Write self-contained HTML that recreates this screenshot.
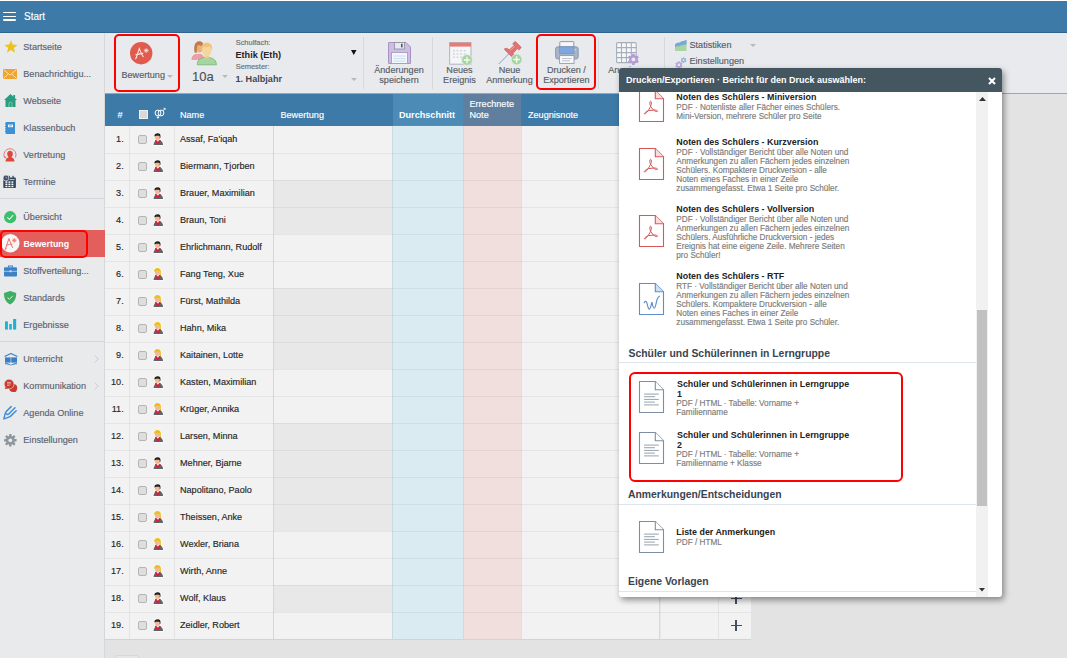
<!DOCTYPE html>
<html><head><meta charset="utf-8">
<style>
*{box-sizing:border-box;margin:0;padding:0}
html,body{width:1070px;height:658px;overflow:hidden;background:#fff;font-family:"Liberation Sans",sans-serif;position:relative}
.a{position:absolute}
.tx{position:absolute;white-space:nowrap;-webkit-text-stroke:0.15px currentColor}
.ic{position:absolute;overflow:visible}
#hdr{position:absolute;left:0;top:1px;width:1067px;height:32px;background:#3e7aa8;border-bottom:1px solid #2f6690}
#hdr .hb{position:absolute;left:3.3px;width:13px;height:1.6px;background:#fff;border-radius:1px}
#side{position:absolute;left:0;top:33px;width:105px;height:625px;background:#e9eaec;border-right:1px solid #d6d7d9}
.sep{position:absolute;left:0;width:104px;height:1px;background:#d5d6d9}
#tb{position:absolute;left:105px;top:33px;width:962px;height:61px;background:#e9eaed;border-bottom:1px solid #a3a5a8}
#content{position:absolute;left:105px;top:94px;width:962px;height:564px;background:#e3e3e3}
.tsep{position:absolute;top:37px;width:1px;height:52px;background:#d7d8da}
.th{position:absolute;top:94px;height:32px;background:#3e7aa8}
.cbh{position:absolute;width:9px;height:9px;background:#d9d9d9;border:1px solid #f0f0f0}
.tr{position:absolute;left:105px;width:646px;height:27px}
.td{position:absolute;top:0;height:26px;background:#f2f2f2}
.cb{position:absolute;left:33px;top:8.7px;width:9px;height:9px;border:1px solid #b5b5b5;border-radius:2px;background:#dedede}
.pi{position:absolute;left:48px;top:6.8px;overflow:visible}
.plus{position:absolute;left:625.5px;top:8px;width:11px;height:11px}
.plus:before{content:"";position:absolute;left:0;top:4.7px;width:11px;height:1.6px;background:#44505e}
.plus:after{content:"";position:absolute;left:4.7px;top:0;width:1.6px;height:11px;background:#44505e}
.redbox{position:absolute;border:2px solid #f00;border-radius:5px}
#dlg{position:absolute;left:619px;top:68px;width:383px;height:529px;background:#fff;box-shadow:2px 3px 6px rgba(0,0,0,.42);border-radius:3px;overflow:hidden}
#dlg .ttl{position:absolute;left:0;top:0;width:383px;height:24px;background:#44565f}
#dlg .body{position:absolute;left:0;top:24px;width:383px;height:505px;overflow:hidden}
#dlg .body > *{margin-top:-24px}
.hl{position:absolute;left:0;width:357px;height:1px;background:#dde6ee}
</style></head><body>
<div id="hdr">
  <div class="hb" style="top:10.6px"></div><div class="hb" style="top:14.6px"></div><div class="hb" style="top:18.4px"></div>
  <div class="tx" style="left:24px;top:10px;color:#fff;font-size:10px;line-height:12px">Start</div>
</div>
<div id="side">
</div>
<div id="tb"></div>
<div id="content"></div>
<svg class="ic" style="left:3.5px;top:40px" width="14" height="13" viewBox="0 0 14 13"><path d="M7 0.3 L8.7 4.6 L13.6 4.9 L9.8 7.9 L11.1 12.7 L7 10 L2.9 12.7 L4.2 7.9 L0.4 4.9 L5.3 4.6Z" fill="#eec21d"/></svg>
<div class="tx" style="left:23.3px;top:41.99px;font-size:9.1px;line-height:10.92px;color:#5a6371;">Startseite</div>
<svg class="ic" style="left:3.3px;top:68.8px" width="14" height="10" viewBox="0 0 14 10"><rect x="0" y="0" width="14" height="10" fill="#f2a32f"/><path d="M0.6 0.8 L7 6 L13.4 0.8 M0.6 9.4 L5 5.2 M13.4 9.4 L9 5.2" stroke="#fde6c0" stroke-width="0.9" fill="none"/></svg>
<div class="tx" style="left:23.3px;top:68.99px;font-size:9.1px;line-height:10.92px;color:#5a6371;">Benachrichtigu...</div>
<svg class="ic" style="left:3.8px;top:94px" width="13" height="13" viewBox="0 0 13 13"><path d="M6.5 0 L13 6 L11.5 6 L11.5 13 L1.5 13 L1.5 6 L0 6Z" fill="#2a9d80"/><rect x="9.3" y="1" width="1.8" height="3.5" fill="#2a9d80"/><path d="M5 13 L5 8.8 Q6.5 7.3 8 8.8 L8 13" fill="none" stroke="#8fd0bd" stroke-width="0.8"/></svg>
<div class="tx" style="left:23.3px;top:95.99px;font-size:9.1px;line-height:10.92px;color:#5a6371;">Webseite</div>
<svg class="ic" style="left:5px;top:121.8px" width="10" height="12" viewBox="0 0 10 12"><rect x="0.6" y="0" width="9.4" height="12" rx="0.6" fill="#3b90d6"/><rect x="3" y="2.6" width="5" height="2.6" fill="#fff"/><rect x="4" y="3.5" width="3" height="0.8" fill="#3b90d6"/><path d="M0 2 h1.2 M0 4.5 h1.2 M0 7 h1.2 M0 9.5 h1.2" stroke="#2a6fa8" stroke-width="0.7"/></svg>
<div class="tx" style="left:23.3px;top:122.99px;font-size:9.1px;line-height:10.92px;color:#5a6371;">Klassenbuch</div>
<svg class="ic" style="left:2.9px;top:148.2px" width="14" height="14" viewBox="0 0 14 14"><path d="M2.5 13.5 C2.5 10.6 4.2 9.6 5.6 9.2 C4.6 8.3 4.1 7 4.2 5.6 C4.3 3.8 5.4 2.8 7 2.8 C8.6 2.8 9.7 3.8 9.8 5.6 C9.9 7 9.4 8.3 8.4 9.2 C9.8 9.6 11.5 10.6 11.5 13.5Z" fill="#e0463a"/><path d="M12.3 9.5 A6 6 0 1 0 1.8 9.8" fill="none" stroke="#e86a60" stroke-width="0.9"/><path d="M0.6 8.6 L2.2 10.8 L3.4 8.8Z" fill="#e86a60"/></svg>
<div class="tx" style="left:23.3px;top:149.99px;font-size:9.1px;line-height:10.92px;color:#5a6371;">Vertretung</div>
<svg class="ic" style="left:3.3px;top:174.8px" width="13.2" height="13.2" viewBox="0 0 13.2 13.2"><rect x="0.3" y="2.6" width="12.6" height="10.4" rx="0.8" fill="#33475b"/><rect x="5.6" y="0.8" width="1.3" height="3" fill="#33475b"/><rect x="9.4" y="0.8" width="1.3" height="3" fill="#33475b"/><circle cx="3" cy="3" r="2.9" fill="#33475b" stroke="#e9eaec" stroke-width="0.7"/><path d="M3 1.6 V3.1 H4.3" stroke="#e9eaec" stroke-width="0.6" fill="none"/><g fill="#fff"><rect x="2.4" y="6.4" width="2" height="1.4"/><rect x="5.4" y="6.4" width="2" height="1.4"/><rect x="8.4" y="6.4" width="2" height="1.4"/><rect x="2.4" y="8.6" width="2" height="1.4"/><rect x="5.4" y="8.6" width="2" height="1.4"/><rect x="8.4" y="8.6" width="2" height="1.4"/><rect x="2.4" y="10.8" width="2" height="1.4"/><rect x="5.4" y="10.8" width="2" height="1.4"/><rect x="8.4" y="10.8" width="2" height="1.4"/></g><path d="M6.5 4.6 h5" stroke="#fff" stroke-width="0.7"/></svg>
<div class="tx" style="left:23.3px;top:176.99px;font-size:9.1px;line-height:10.92px;color:#5a6371;">Termine</div>
<svg class="ic" style="left:4.1px;top:210.6px" width="12.4" height="12.4" viewBox="0 0 12.4 12.4"><circle cx="6.2" cy="6.2" r="6.1" fill="#3cbf6a"/><path d="M3.3 6.4 L5.4 8.4 L9.2 4.2" stroke="#d9f5e2" stroke-width="1.1" fill="none"/></svg>
<div class="tx" style="left:23.3px;top:211.99px;font-size:9.1px;line-height:10.92px;color:#5a6371;">Übersicht</div>
<svg class="ic" style="left:4px;top:265px" width="13" height="11.5" viewBox="0 0 13 11.5"><rect x="0" y="2.3" width="13" height="9.2" rx="1" fill="#3b82c4"/><path d="M4.5 2.3 V1 H8.5 V2.3" stroke="#3b82c4" stroke-width="1.1" fill="none"/><path d="M0 6.3 H13" stroke="#cfe2f3" stroke-width="0.7"/><rect x="5.5" y="5.4" width="2" height="1.8" fill="#cfe2f3"/></svg>
<div class="tx" style="left:23.3px;top:265.99px;font-size:9.1px;line-height:10.92px;color:#5a6371;">Stoffverteilung...</div>
<svg class="ic" style="left:4.2px;top:290.6px" width="12.2" height="13.5" viewBox="0 0 12.2 13.5"><path d="M6.1 0 L12.2 2 C12.2 8 10.5 11 6.1 13.5 C1.7 11 0 8 0 2Z" fill="#3dae62"/><path d="M3.6 6.6 L5.4 8.3 L8.8 4.8" stroke="#d9f1df" stroke-width="1" fill="none"/></svg>
<div class="tx" style="left:23.3px;top:292.99px;font-size:9.1px;line-height:10.92px;color:#5a6371;">Standards</div>
<svg class="ic" style="left:4.9px;top:319.2px" width="11.2" height="10.6" viewBox="0 0 11.2 10.6"><rect x="0" y="2.4" width="2.9" height="8.2" fill="#1fb1cf"/><rect x="4.2" y="5" width="2.6" height="5.6" fill="#1fb1cf"/><rect x="8.1" y="0" width="3.1" height="10.6" fill="#1fb1cf"/></svg>
<div class="tx" style="left:23.3px;top:319.99px;font-size:9.1px;line-height:10.92px;color:#5a6371;">Ergebnisse</div>
<svg class="ic" style="left:3.5px;top:352.6px" width="14" height="12.6" viewBox="0 0 14 12.6"><path d="M0.6 3.6 L6.9 0.5 L13.4 3.6" fill="none" stroke="#3a7fc2" stroke-width="1.1" stroke-linejoin="round"/><path d="M1 4.4 H13 V9.6 H1Z" fill="#3a7fc2"/><path d="M6.9 4.4 V10.6" stroke="#e9eaec" stroke-width="0.6"/><path d="M1 9.8 C3 10 5 10.4 6.9 11.8 C8.8 10.4 11 10 13 9.8 V11.2 C11 11.2 8.8 11.8 6.9 12.4 C5 11.8 3 11.2 1 11.2Z" fill="#4f8fcb"/></svg>
<div class="tx" style="left:23.3px;top:353.99px;font-size:9.1px;line-height:10.92px;color:#5a6371;">Unterricht</div>
<svg class="ic" style="left:3.8px;top:379px" width="13.6" height="13.4" viewBox="0 0 13.6 13.4"><circle cx="9.2" cy="8.9" r="4" fill="#c9392f"/><path d="M10.6 11.2 L12.8 13 L9 12.6Z" fill="#c9392f"/><circle cx="5.1" cy="5.1" r="4.9" fill="#c9392f" stroke="#e9eaec" stroke-width="0.6"/><path d="M1.8 8 L0.6 10 L4.2 9.6Z" fill="#c9392f"/><path d="M3 3.4 h4 M3 4.9 h4 M3 6.4 h2.6" stroke="#eab0aa" stroke-width="0.9"/></svg>
<div class="tx" style="left:23.3px;top:380.99px;font-size:9.1px;line-height:10.92px;color:#5a6371;">Kommunikation</div>
<svg class="ic" style="left:3.3px;top:405.8px" width="14.2" height="13.8" viewBox="0 0 14.2 13.8"><g fill="none" stroke="#3f8fd8" stroke-width="1.5" stroke-linecap="round" stroke-linejoin="round"><path d="M8.2 0.6 L3 5.8 C2 7.4 1.4 10 0.9 12.9 C3.6 12 6 11.2 7.4 10.4 L13.2 4.8"/><path d="M12 1.8 L5.8 8 C5 8.8 4 8.6 3.6 7.8"/></g></svg>
<div class="tx" style="left:23.3px;top:407.99px;font-size:9.1px;line-height:10.92px;color:#5a6371;">Agenda Online</div>
<svg class="ic" style="left:3.8px;top:433.8px" width="12.6" height="12.6" viewBox="0 0 12.6 12.6"><g fill="#8c969b"><circle cx="6.3" cy="6.3" r="4.4"/><g id="tth"><rect x="5.1" y="0" width="2.4" height="12.6" rx="0.4"/></g><rect x="5.1" y="0" width="2.4" height="12.6" rx="0.4" transform="rotate(45 6.3 6.3)"/><rect x="5.1" y="0" width="2.4" height="12.6" rx="0.4" transform="rotate(90 6.3 6.3)"/><rect x="5.1" y="0" width="2.4" height="12.6" rx="0.4" transform="rotate(135 6.3 6.3)"/></g><circle cx="6.3" cy="6.3" r="1.9" fill="#e9eaec"/></svg>
<div class="tx" style="left:23.3px;top:434.99px;font-size:9.1px;line-height:10.92px;color:#5a6371;">Einstellungen</div>
<div class="a" style="left:0;top:230px;width:105px;height:27px;background:#e35f5c"></div>
<svg class="ic" style="left:0.9px;top:233.8px" width="18.6" height="18.6" viewBox="0 0 18.6 18.6"><circle cx="9.3" cy="9.3" r="9.2" fill="#f7f7f7"/><path d="M4.6 14.6 C5.4 12 6.8 7.6 8 4.6 C9 7.4 10.2 10.8 11.6 13.6 M5.6 11.2 C7.4 10.6 9.2 10.2 11 10 M4.2 15.6 L5.2 14.2" stroke="#e57470" stroke-width="1" fill="none" stroke-linecap="round"/><path d="M11.4 6.4 h3.8 M13.3 4.5 v3.8 M12 5 L14.6 7.8 M14.6 5 L12 7.8" stroke="#e57470" stroke-width="0.8" stroke-linecap="round"/></svg>
<div class="tx" style="left:23.4px;top:238.62px;font-size:8.85px;line-height:10.62px;color:#fff;font-weight:bold;-webkit-text-stroke:0;">Bewertung</div>
<div class="redbox" style="left:-0.5px;top:229.5px;width:88px;height:28.3px;border-radius:5px"></div>
<div class="sep" style="top:198px"></div><div class="sep" style="top:341px"></div>
<svg class="ic" style="left:94px;top:354.5px" width="5" height="8" viewBox="0 0 5 8"><path d="M0.8 0.5 L4.2 4 L0.8 7.5" stroke="#c4c6c9" stroke-width="0.9" fill="none"/></svg>
<svg class="ic" style="left:94px;top:381.5px" width="5" height="8" viewBox="0 0 5 8"><path d="M0.8 0.5 L4.2 4 L0.8 7.5" stroke="#c4c6c9" stroke-width="0.9" fill="none"/></svg>
<svg class="ic" style="left:129.8px;top:41.5px" width="22.4" height="22.4" viewBox="0 0 22.4 22.4"><circle cx="11.2" cy="11.2" r="11.2" fill="#e05a4e"/><path d="M6.2 16 C7.4 12.5 8.4 9 9.3 6.6 C10.4 9.4 11.6 12.4 13.2 14.6 M5.8 12.8 C8 12.2 10.4 11.8 12.8 11.4 M5.6 16.6 L6.6 15.2" stroke="#fbe6e3" stroke-width="1.1" fill="none" stroke-linecap="round"/><path d="M14.2 8.6 h4 M16.2 6.6 v4 M14.8 7.2 L17.6 10 M17.6 7.2 L14.8 10" stroke="#fbe6e3" stroke-width="0.8" stroke-linecap="round"/></svg>
<div class="tx" style="left:121.5px;top:70.49px;font-size:9.1px;line-height:10.92px;color:#555d66;">Bewertung</div>
<svg class="ic" style="left:166.5px;top:74.5px" width="6" height="3" viewBox="0 0 6 3"><path d="M0 0 H6 L3 3Z" fill="#b7b9bc"/></svg>
<svg class="ic" style="left:191px;top:41px" width="26" height="24" viewBox="0 0 26 24"><path d="M0.8 18.4 C0.8 15.6 2.6 13.8 5.2 13.3 L9.5 13.3 C11.5 13.8 12.6 15 12.6 18.4Z" fill="#ee9ea6" stroke="#d98790" stroke-width="0.5"/><ellipse cx="8.2" cy="7.2" rx="3.4" ry="4.4" fill="#e9b27c"/><path d="M3.6 11.4 C2.6 6 3.4 0.6 8 0.2 C11.4 0 12.8 2.6 12.4 5.4 C10.6 5 8.6 4 6.4 4.4 C5.8 6.6 5.8 9.6 5.6 12 Z" fill="#c47b4a"/><path d="M6.2 23.8 C6.2 19.8 8.6 17.4 12.6 16.6 L18.8 16.6 C22.8 17.4 25.4 19.8 25.4 23.8Z" fill="#a6d6a0" stroke="#6fae6a" stroke-width="0.7"/><path d="M13.6 14 L13.6 17.4 L18 17.4 L18 14Z" fill="#efcb8f"/><ellipse cx="15.8" cy="9.4" rx="4.8" ry="5.8" fill="#f6d69e"/><path d="M10.6 9.6 C10 4 12 1.8 15.8 1.8 C19.6 1.8 21.8 4 21 9.8 C20.4 7.6 19.6 6.2 18.6 5.6 C16.6 6.6 13.6 6.4 12.2 5.8 C11.4 6.8 11 8 10.6 9.6Z" fill="#eec37d"/></svg>
<div class="tx" style="left:192px;top:68.60px;font-size:13px;line-height:15.6px;color:#4a525b;">10a</div>
<svg class="ic" style="left:221.5px;top:75px" width="6" height="3" viewBox="0 0 6 3"><path d="M0 0 H6 L3 3Z" fill="#b7b9bc"/></svg>
<div class="tx" style="left:235.7px;top:39.35px;font-size:7.45px;line-height:8.94px;color:#6a6f75;">Schulfach:</div>
<div class="tx" style="left:235.5px;top:49.79px;font-size:9.1px;line-height:10.92px;color:#222;font-weight:bold;-webkit-text-stroke:0;">Ethik (Eth)</div>
<svg class="ic" style="left:350.5px;top:50px" width="5.5" height="5" viewBox="0 0 5.5 5"><path d="M0 0 H5.5 L2.75 5Z" fill="#111"/></svg>
<div class="tx" style="left:235.7px;top:62.55px;font-size:7.45px;line-height:8.94px;color:#6a6f75;">Semester:</div>
<div class="tx" style="left:235.5px;top:74.09px;font-size:9.1px;line-height:10.92px;color:#3f4750;font-weight:bold;-webkit-text-stroke:0;">1. Halbjahr</div>
<svg class="ic" style="left:350.5px;top:77.5px" width="6" height="3" viewBox="0 0 6 3"><path d="M0 0 H6 L3 3Z" fill="#b7b9bc"/></svg>
<div class="tsep" style="left:363px"></div>
<svg class="ic" style="left:387.5px;top:42px" width="23" height="22" viewBox="0 0 23 22"><path d="M0.5 1 Q0.5 0.5 1 0.5 L18 0.5 L22.5 5 L22.5 21 Q22.5 21.5 22 21.5 L1 21.5 Q0.5 21.5 0.5 21Z" fill="#cdbde3" stroke="#a593c2" stroke-width="1"/><rect x="6.5" y="0.5" width="10" height="6.5" fill="#e6e9ee" stroke="#8c8fa0" stroke-width="0.8"/><rect x="13" y="1.8" width="1.6" height="3.6" fill="#555"/><rect x="3.5" y="10.5" width="16" height="11" fill="#f4f7fb" stroke="#a593c2" stroke-width="0.8"/><path d="M5.5 14 H17.5 M5.5 16.5 H17.5 M5.5 19 H17.5" stroke="#bfd6ea" stroke-width="0.8"/></svg>
<div class="tx" style="left:199px;width:400px;text-align:center;top:64.89px;font-size:9.1px;line-height:10.92px;color:#555d66;">Änderungen</div>
<div class="tx" style="left:199px;width:400px;text-align:center;top:75.29px;font-size:9.1px;line-height:10.92px;color:#555d66;">speichern</div>
<div class="tsep" style="left:432px"></div>
<svg class="ic" style="left:448.5px;top:41.5px" width="25" height="24" viewBox="0 0 25 24"><rect x="0.6" y="0.6" width="21.4" height="21.6" fill="#f5f6f8" stroke="#b3bac4" stroke-width="1.1"/><rect x="0.6" y="0.6" width="21.4" height="4" fill="#e67c79"/><g fill="#cdd3da"><rect x="4.0" y="8.0" width="1.8" height="1.4"/><rect x="4.0" y="11.3" width="1.8" height="1.4"/><rect x="4.0" y="14.6" width="1.8" height="1.4"/><rect x="7.6" y="8.0" width="1.8" height="1.4"/><rect x="7.6" y="11.3" width="1.8" height="1.4"/><rect x="7.6" y="14.6" width="1.8" height="1.4"/><rect x="11.2" y="8.0" width="1.8" height="1.4"/><rect x="11.2" y="11.3" width="1.8" height="1.4"/><rect x="11.2" y="14.6" width="1.8" height="1.4"/><rect x="14.8" y="8.0" width="1.8" height="1.4"/><rect x="14.8" y="11.3" width="1.8" height="1.4"/><rect x="14.8" y="14.6" width="1.8" height="1.4"/></g><circle cx="18" cy="18" r="5.4" fill="#a4d59e" stroke="#e9eaed" stroke-width="0.8"/><path d="M18 14.8 V21.2 M14.8 18 H21.2" stroke="#f4fbf3" stroke-width="1.4"/></svg>
<div class="tx" style="left:259.5px;width:400px;text-align:center;top:64.89px;font-size:9.1px;line-height:10.92px;color:#555d66;">Neues</div>
<div class="tx" style="left:259.5px;width:400px;text-align:center;top:75.29px;font-size:9.1px;line-height:10.92px;color:#555d66;">Ereignis</div>
<svg class="ic" style="left:497px;top:41px" width="26" height="24" viewBox="0 0 26 24"><g transform="translate(21 3.7) rotate(45)"><path d="M0 13 V27.5" stroke="#8ea0b8" stroke-width="0.9"/><path d="M-4.4 0.4 Q-4.4 -0.4 -3.6 -0.4 H3.6 Q4.4 -0.4 4.4 0.4 V2.6 Q4.4 3.2 3.6 3.2 H2.2 L2.6 9.6 Q6.6 10.6 6.6 12.2 Q6.6 13 5.8 13 H-5.8 Q-6.6 13 -6.6 12.2 Q-6.6 10.6 -2.6 9.6 L-2.2 3.2 H-3.6 Q-4.4 3.2 -4.4 2.6Z" fill="#e27270" stroke="#c65a5a" stroke-width="0.6"/><path d="M-1.2 3.6 L-1.5 9.4" stroke="#f3aaa8" stroke-width="0.8"/></g><circle cx="19.6" cy="18.5" r="5.4" fill="#a4d59e" stroke="#e9eaed" stroke-width="0.8"/><path d="M19.6 15.3 V21.7 M16.4 18.5 H22.8" stroke="#f4fbf3" stroke-width="1.4"/></svg>
<div class="tx" style="left:309.5px;width:400px;text-align:center;top:64.89px;font-size:9.1px;line-height:10.92px;color:#555d66;">Neue</div>
<div class="tx" style="left:309.5px;width:400px;text-align:center;top:75.29px;font-size:9.1px;line-height:10.92px;color:#555d66;">Anmerkung</div>
<svg class="ic" style="left:554.5px;top:41.2px" width="24" height="23" viewBox="0 0 24 23"><rect x="4.8" y="0.6" width="14" height="7" rx="0.6" fill="#f7f7f7" stroke="#8e9bad" stroke-width="1"/><rect x="0.6" y="5.8" width="22.6" height="12.2" rx="2.2" fill="#a7b5c9" stroke="#8594a8" stroke-width="0.9"/><rect x="4.6" y="5.8" width="14.4" height="6.6" fill="#7ea6df" stroke="#6d8fc2" stroke-width="0.6"/><rect x="4.6" y="14.6" width="14.4" height="7.8" fill="#fafafa" stroke="#8e9bad" stroke-width="0.9"/><path d="M7 17.6 H16.6 M7 19.8 H15" stroke="#a9b3bf" stroke-width="0.8"/><circle cx="20.2" cy="8.9" r="0.8" fill="#f1d46a"/></svg>
<div class="tx" style="left:366.4px;width:400px;text-align:center;top:64.89px;font-size:9.1px;line-height:10.92px;color:#555d66;">Drucken /</div>
<div class="tx" style="left:366.4px;width:400px;text-align:center;top:75.29px;font-size:9.1px;line-height:10.92px;color:#555d66;">Exportieren</div>
<div class="redbox" style="left:536px;top:34px;width:60px;height:55.5px"></div>
<div class="redbox" style="left:114px;top:34px;width:66px;height:58px"></div>
<div class="tsep" style="left:598px"></div>
<svg class="ic" style="left:615.5px;top:42px" width="24" height="24" viewBox="0 0 24 24"><g stroke="#a5afba" stroke-width="1.1" fill="#f7f7f8"><rect x="0.6" y="0.6" width="19.6" height="20" rx="1.2"/></g><path d="M5.5 0.6 V20.6 M10.4 0.6 V20.6 M15.3 0.6 V20.6 M0.6 5.6 H20.2 M0.6 10.6 H20.2 M0.6 15.6 H20.2" stroke="#a5afba" stroke-width="1.1"/><g transform="translate(17.4 17.4)"><g fill="#b49bd8"><rect x="-1.25" y="-5.65" width="2.50" height="11.31" rx="0.3" transform="rotate(0)"/><rect x="-1.25" y="-5.65" width="2.50" height="11.31" rx="0.3" transform="rotate(60)"/><rect x="-1.25" y="-5.65" width="2.50" height="11.31" rx="0.3" transform="rotate(120)"/><circle r="4.37"/></g><circle r="1.95" fill="#e9eaed"/></g></svg>
<div class="tx" style="left:608.3px;top:64.89px;font-size:9.1px;line-height:10.92px;color:#555d66;">Anzeige</div>
<div class="tsep" style="left:664px"></div>
<svg class="ic" style="left:674.5px;top:40px" width="11.5" height="11" viewBox="0 0 11.5 11"><path d="M0 4.5 C2 2 3.5 3.5 5.5 2 C7.5 0.5 9.5 1.2 11.5 0 L11.5 11 L0 11Z" fill="#a9d5a2"/><path d="M0 4.5 C2 2 3.5 3.5 5.5 2 C7.5 0.5 9.5 1.2 11.5 0 L11.5 4.6 C9.5 5.2 8 4.4 6 5.6 C4 6.8 2 5.6 0 7.2Z" fill="#7aa7df"/></svg>
<div class="tx" style="left:689.5px;top:40.39px;font-size:9.1px;line-height:10.92px;color:#555d66;">Statistiken</div>
<svg class="ic" style="left:750px;top:44px" width="6" height="3" viewBox="0 0 6 3"><path d="M0 0 H6 L3 3Z" fill="#b7b9bc"/></svg>
<svg class="ic" style="left:674.5px;top:56.5px" width="12" height="12" viewBox="0 0 12 12"><g transform="translate(3.9 7.9)"><g fill="#bba6dc"><rect x="-0.83" y="-3.77" width="1.66" height="7.54" rx="0.3" transform="rotate(0)"/><rect x="-0.83" y="-3.77" width="1.66" height="7.54" rx="0.3" transform="rotate(60)"/><rect x="-0.83" y="-3.77" width="1.66" height="7.54" rx="0.3" transform="rotate(120)"/><circle r="2.91"/></g><circle r="1.30" fill="#e9eaed"/></g><g transform="translate(8.6 3.2)"><g fill="#8ab6e0"><rect x="-0.64" y="-2.90" width="1.28" height="5.80" rx="0.3" transform="rotate(0)"/><rect x="-0.64" y="-2.90" width="1.28" height="5.80" rx="0.3" transform="rotate(60)"/><rect x="-0.64" y="-2.90" width="1.28" height="5.80" rx="0.3" transform="rotate(120)"/><circle r="2.24"/></g><circle r="1.00" fill="#e9eaed"/></g></svg>
<div class="tx" style="left:689.5px;top:56.39px;font-size:9.1px;line-height:10.92px;color:#555d66;">Einstellungen</div>
<div class="th" style="left:105px;width:646px"></div>
<div class="th" style="left:393px;width:70px;background:#4b8bb6"></div>
<div class="a" style="left:393px;top:125px;width:70px;height:1.5px;background:#1ea8c2"></div>
<div class="th" style="left:463px;width:58px;background:#607f9e"></div>
<div class="tx" style="left:117.5px;top:109.69px;font-size:9.1px;line-height:10.92px;color:#fff;">#</div>
<div class="cbh" style="left:139px;top:110px"></div>
<svg class="ic" style="left:154px;top:107px" width="12" height="12" viewBox="0 0 12 12"><circle cx="4" cy="6" r="2.9" fill="none" stroke="#fff" stroke-width="1"/><circle cx="7" cy="6" r="2.9" fill="none" stroke="#fff" stroke-width="1"/><path d="M4 8.9 V11.6 M2.8 10.4 H5.2 M9 3.8 L11 1.5 M9.6 1.4 H11.1 V2.9" stroke="#fff" stroke-width="0.9" fill="none"/></svg>
<div class="tx" style="left:180px;top:109.69px;font-size:9.1px;line-height:10.92px;color:#fff;">Name</div>
<div class="tx" style="left:280.5px;top:109.69px;font-size:9.1px;line-height:10.92px;color:#fff;">Bewertung</div>
<div class="tx" style="left:399px;top:109.69px;font-size:9.1px;line-height:10.92px;color:#fff;font-weight:bold;-webkit-text-stroke:0;">Durchschnitt</div>
<div class="tx" style="left:469.5px;top:98.89px;font-size:9.1px;line-height:10.92px;color:#fff;">Errechnete</div>
<div class="tx" style="left:469.5px;top:109.69px;font-size:9.1px;line-height:10.92px;color:#fff;">Note</div>
<div class="tx" style="left:528px;top:109.69px;font-size:9.1px;line-height:10.92px;color:#fff;">Zeugnisnote</div>
<div class="a" style="left:105px;top:126px;width:646px;height:513px;background:#f2f2f2"></div>
<div class="a" style="left:274px;top:180px;width:118px;height:27px;background:#e8e8e8"></div>
<div class="a" style="left:274px;top:207px;width:118px;height:27px;background:#e8e8e8"></div>
<div class="a" style="left:274px;top:288px;width:118px;height:27px;background:#e8e8e8"></div>
<div class="a" style="left:274px;top:315px;width:118px;height:27px;background:#e8e8e8"></div>
<div class="a" style="left:274px;top:342px;width:118px;height:27px;background:#e8e8e8"></div>
<div class="a" style="left:274px;top:423px;width:118px;height:27px;background:#e8e8e8"></div>
<div class="a" style="left:274px;top:450px;width:118px;height:27px;background:#e8e8e8"></div>
<div class="a" style="left:274px;top:477px;width:118px;height:27px;background:#e8e8e8"></div>
<div class="a" style="left:274px;top:504px;width:118px;height:27px;background:#e8e8e8"></div>
<div class="a" style="left:274px;top:585px;width:118px;height:27px;background:#e8e8e8"></div>
<div class="a" style="left:392px;top:126px;width:71px;height:513px;background:#daecf1"></div>
<div class="a" style="left:463px;top:126px;width:58px;height:513px;background:#f1dfdd"></div>
<div class="a" style="left:105px;top:153px;width:646px;height:1px;background:rgba(0,0,0,.05)"></div>
<div class="a" style="left:105px;top:180px;width:646px;height:1px;background:rgba(0,0,0,.05)"></div>
<div class="a" style="left:105px;top:207px;width:646px;height:1px;background:rgba(0,0,0,.05)"></div>
<div class="a" style="left:105px;top:234px;width:646px;height:1px;background:rgba(0,0,0,.05)"></div>
<div class="a" style="left:105px;top:261px;width:646px;height:1px;background:rgba(0,0,0,.05)"></div>
<div class="a" style="left:105px;top:288px;width:646px;height:1px;background:rgba(0,0,0,.05)"></div>
<div class="a" style="left:105px;top:315px;width:646px;height:1px;background:rgba(0,0,0,.05)"></div>
<div class="a" style="left:105px;top:342px;width:646px;height:1px;background:rgba(0,0,0,.05)"></div>
<div class="a" style="left:105px;top:369px;width:646px;height:1px;background:rgba(0,0,0,.05)"></div>
<div class="a" style="left:105px;top:396px;width:646px;height:1px;background:rgba(0,0,0,.05)"></div>
<div class="a" style="left:105px;top:423px;width:646px;height:1px;background:rgba(0,0,0,.05)"></div>
<div class="a" style="left:105px;top:450px;width:646px;height:1px;background:rgba(0,0,0,.05)"></div>
<div class="a" style="left:105px;top:477px;width:646px;height:1px;background:rgba(0,0,0,.05)"></div>
<div class="a" style="left:105px;top:504px;width:646px;height:1px;background:rgba(0,0,0,.05)"></div>
<div class="a" style="left:105px;top:531px;width:646px;height:1px;background:rgba(0,0,0,.05)"></div>
<div class="a" style="left:105px;top:558px;width:646px;height:1px;background:rgba(0,0,0,.05)"></div>
<div class="a" style="left:105px;top:585px;width:646px;height:1px;background:rgba(0,0,0,.05)"></div>
<div class="a" style="left:105px;top:612px;width:646px;height:1px;background:rgba(0,0,0,.05)"></div>
<div class="a" style="left:105px;top:639px;width:646px;height:1px;background:rgba(0,0,0,.05)"></div>
<div class="a" style="left:129px;top:126px;width:1px;height:514px;background:rgba(0,0,0,0.055)"></div>
<div class="a" style="left:174px;top:126px;width:1px;height:514px;background:rgba(0,0,0,0.055)"></div>
<div class="a" style="left:273px;top:126px;width:1px;height:514px;background:rgba(0,0,0,0.11)"></div>
<div class="a" style="left:392px;top:126px;width:1px;height:514px;background:rgba(0,0,0,0.07)"></div>
<div class="a" style="left:463px;top:126px;width:1px;height:514px;background:rgba(0,0,0,0.05)"></div>
<div class="a" style="left:521px;top:126px;width:1px;height:514px;background:rgba(0,0,0,0.08)"></div>
<div class="a" style="left:659px;top:126px;width:1px;height:514px;background:rgba(0,0,0,0.1)"></div>
<div class="a" style="left:660px;top:126px;width:1px;height:514px;background:rgba(0,0,0,0.04)"></div>
<div class="a" style="left:718px;top:126px;width:1px;height:514px;background:rgba(0,0,0,0.06)"></div>
<div class="a" style="left:105px;top:639px;width:646px;height:1px;background:#d3d3d3"></div>
<div class="a" style="left:114.5px;top:655px;width:24px;height:8px;border:1px solid #c6dbee;border-radius:2px;background:#e6e6e6"></div>
<div class="tr" style="top:126px"><div class="tx" style="right:627.3px;text-align:right;top:7.89px;font-size:9.1px;line-height:10.92px;color:#262626;">1.</div><div class="cb"></div><svg class="pi" width="11" height="13" viewBox="0 0 11 13"><path d="M0.6 12.1 C0.6 9 2 7.6 3 7.1 C1.8 6 1.2 4.8 1.3 3.4 C1.2 1 3 0 4.8 0.1 C7 0.2 8.2 1.8 7.8 5 C7.7 6 7.4 6.6 7 7 C8.8 7.6 10 9 10 12.1Z" fill="#fff" stroke="#fff" stroke-width="1.4" opacity=".7"/><path d="M0.6 12.1 C0.6 9 2 7.6 4 6.9 L6.5 6.9 C8.6 7.6 10 9 10 12.1Z" fill="#5f6468"/><path d="M1.8 7.4 L4.6 12.1 L8 7.4 L6.4 6.8 L4.9 8.8 L3.4 6.8Z" fill="#d81e3a"/><path d="M3.5 6.9 L4.9 8.7 L6.3 6.9Z" fill="#f4f4f4"/><ellipse cx="4.4" cy="4.3" rx="2.6" ry="2.8" fill="#f2bb97"/><path d="M1.4 3.6 C1 1.2 3 0.2 4.8 0.3 C7 0.3 8 1.6 7.4 4.8 L6.8 5.5 L6.6 3 C5.4 2.6 3.6 2.4 2 3.2Z" fill="#242424"/></svg><div class="tx" style="left:75px;top:7.89px;font-size:9.1px;line-height:10.92px;color:#262626;">Assaf, Fa'iqah</div><div class="plus"></div></div>
<div class="tr" style="top:153px"><div class="tx" style="right:627.3px;text-align:right;top:7.89px;font-size:9.1px;line-height:10.92px;color:#262626;">2.</div><div class="cb"></div><svg class="pi" width="11" height="13" viewBox="0 0 11 13"><path d="M0.6 12.1 C0.6 9 2 7.6 3 7.1 C1.8 6 1.2 4.8 1.3 3.4 C1.2 1 3 0 4.8 0.1 C7 0.2 8.2 1.8 7.8 5 C7.7 6 7.4 6.6 7 7 C8.8 7.6 10 9 10 12.1Z" fill="#fff" stroke="#fff" stroke-width="1.4" opacity=".7"/><path d="M0.6 12.1 C0.6 9 2 7.6 4 6.9 L6.5 6.9 C8.6 7.6 10 9 10 12.1Z" fill="#5f6468"/><path d="M1.8 7.4 L4.6 12.1 L8 7.4 L6.4 6.8 L4.9 8.8 L3.4 6.8Z" fill="#d81e3a"/><path d="M3.5 6.9 L4.9 8.7 L6.3 6.9Z" fill="#f4f4f4"/><ellipse cx="4.4" cy="4.3" rx="2.6" ry="2.8" fill="#f2bb97"/><path d="M1.4 3.6 C1 1.2 3 0.2 4.8 0.3 C7 0.3 8 1.6 7.4 4.8 L6.8 5.5 L6.6 3 C5.4 2.6 3.6 2.4 2 3.2Z" fill="#242424"/></svg><div class="tx" style="left:75px;top:7.89px;font-size:9.1px;line-height:10.92px;color:#262626;">Biermann, Tjorben</div><div class="plus"></div></div>
<div class="tr" style="top:180px"><div class="tx" style="right:627.3px;text-align:right;top:7.89px;font-size:9.1px;line-height:10.92px;color:#262626;">3.</div><div class="cb"></div><svg class="pi" width="11" height="13" viewBox="0 0 11 13"><path d="M0.6 12.1 C0.6 9 2 7.6 3 7.1 C1.8 6 1.2 4.8 1.3 3.4 C1.2 1 3 0 4.8 0.1 C7 0.2 8.2 1.8 7.8 5 C7.7 6 7.4 6.6 7 7 C8.8 7.6 10 9 10 12.1Z" fill="#fff" stroke="#fff" stroke-width="1.4" opacity=".7"/><path d="M0.6 12.1 C0.6 9 2 7.6 4 6.9 L6.5 6.9 C8.6 7.6 10 9 10 12.1Z" fill="#5f6468"/><path d="M1.8 7.4 L4.6 12.1 L8 7.4 L6.4 6.8 L4.9 8.8 L3.4 6.8Z" fill="#d81e3a"/><path d="M3.5 6.9 L4.9 8.7 L6.3 6.9Z" fill="#f4f4f4"/><ellipse cx="4.4" cy="4.3" rx="2.6" ry="2.8" fill="#f2bb97"/><path d="M1.4 3.6 C1 1.2 3 0.2 4.8 0.3 C7 0.3 8 1.6 7.4 4.8 L6.8 5.5 L6.6 3 C5.4 2.6 3.6 2.4 2 3.2Z" fill="#242424"/></svg><div class="tx" style="left:75px;top:7.89px;font-size:9.1px;line-height:10.92px;color:#262626;">Brauer, Maximilian</div><div class="plus"></div></div>
<div class="tr" style="top:207px"><div class="tx" style="right:627.3px;text-align:right;top:7.89px;font-size:9.1px;line-height:10.92px;color:#262626;">4.</div><div class="cb"></div><svg class="pi" width="11" height="13" viewBox="0 0 11 13"><path d="M0.6 12.1 C0.6 9 2 7.6 3 7.1 C1.8 6 1.2 4.8 1.3 3.4 C1.2 1 3 0 4.8 0.1 C7 0.2 8.2 1.8 7.8 5 C7.7 6 7.4 6.6 7 7 C8.8 7.6 10 9 10 12.1Z" fill="#fff" stroke="#fff" stroke-width="1.4" opacity=".7"/><path d="M0.6 12.1 C0.6 9 2 7.6 4 6.9 L6.5 6.9 C8.6 7.6 10 9 10 12.1Z" fill="#5f6468"/><path d="M1.8 7.4 L4.6 12.1 L8 7.4 L6.4 6.8 L4.9 8.8 L3.4 6.8Z" fill="#d81e3a"/><path d="M3.5 6.9 L4.9 8.7 L6.3 6.9Z" fill="#f4f4f4"/><ellipse cx="4.4" cy="4.3" rx="2.6" ry="2.8" fill="#f2bb97"/><path d="M1.4 3.6 C1 1.2 3 0.2 4.8 0.3 C7 0.3 8 1.6 7.4 4.8 L6.8 5.5 L6.6 3 C5.4 2.6 3.6 2.4 2 3.2Z" fill="#242424"/></svg><div class="tx" style="left:75px;top:7.89px;font-size:9.1px;line-height:10.92px;color:#262626;">Braun, Toni</div><div class="plus"></div></div>
<div class="tr" style="top:234px"><div class="tx" style="right:627.3px;text-align:right;top:7.89px;font-size:9.1px;line-height:10.92px;color:#262626;">5.</div><div class="cb"></div><svg class="pi" width="11" height="13" viewBox="0 0 11 13"><path d="M0.6 12.1 C0.6 9 2 7.6 3 7.1 C1.8 6 1.2 4.8 1.3 3.4 C1.2 1 3 0 4.8 0.1 C7 0.2 8.2 1.8 7.8 5 C7.7 6 7.4 6.6 7 7 C8.8 7.6 10 9 10 12.1Z" fill="#fff" stroke="#fff" stroke-width="1.4" opacity=".7"/><path d="M0.6 12.1 C0.6 9 2 7.6 4 6.9 L6.5 6.9 C8.6 7.6 10 9 10 12.1Z" fill="#5f6468"/><path d="M1.8 7.4 L4.6 12.1 L8 7.4 L6.4 6.8 L4.9 8.8 L3.4 6.8Z" fill="#d81e3a"/><path d="M3.5 6.9 L4.9 8.7 L6.3 6.9Z" fill="#f4f4f4"/><ellipse cx="4.4" cy="4.3" rx="2.6" ry="2.8" fill="#f2bb97"/><path d="M1.4 3.6 C1 1.2 3 0.2 4.8 0.3 C7 0.3 8 1.6 7.4 4.8 L6.8 5.5 L6.6 3 C5.4 2.6 3.6 2.4 2 3.2Z" fill="#242424"/></svg><div class="tx" style="left:75px;top:7.89px;font-size:9.1px;line-height:10.92px;color:#262626;">Ehrlichmann, Rudolf</div><div class="plus"></div></div>
<div class="tr" style="top:261px"><div class="tx" style="right:627.3px;text-align:right;top:7.89px;font-size:9.1px;line-height:10.92px;color:#262626;">6.</div><div class="cb"></div><svg class="pi" width="11" height="13" viewBox="0 0 11 13"><path d="M0.6 12.1 C0.6 9 2 7.6 3 7.1 C1.8 6 1.2 4.8 1.3 3.4 C1.2 1 3 0 4.8 0.1 C7 0.2 8.2 1.8 7.8 5 C7.7 6 7.4 6.6 7 7 C8.8 7.6 10 9 10 12.1Z" fill="#fff" stroke="#fff" stroke-width="1.4" opacity=".7"/><path d="M0.6 12.1 C0.6 9 2 7.6 4 6.9 L6.5 6.9 C8.6 7.6 10 9 10 12.1Z" fill="#5f6468"/><path d="M1.8 7.4 L4.6 12.1 L8 7.4 L6.4 6.8 L4.9 8.8 L3.4 6.8Z" fill="#d81e3a"/><path d="M3.5 6.9 L4.9 8.7 L6.3 6.9Z" fill="#f4f4f4"/><ellipse cx="4.3" cy="4.5" rx="2.5" ry="2.7" fill="#f2bb97"/><path d="M1.2 4 C0.8 1.2 3 0 4.8 0.1 C7.4 0.2 8.2 2.2 7.8 5 L8 7.2 L6.6 6.8 L6.4 3.2 C5 2.6 3.4 2.4 2 3.4Z" fill="#e8c01c"/></svg><div class="tx" style="left:75px;top:7.89px;font-size:9.1px;line-height:10.92px;color:#262626;">Fang Teng, Xue</div><div class="plus"></div></div>
<div class="tr" style="top:288px"><div class="tx" style="right:627.3px;text-align:right;top:7.89px;font-size:9.1px;line-height:10.92px;color:#262626;">7.</div><div class="cb"></div><svg class="pi" width="11" height="13" viewBox="0 0 11 13"><path d="M0.6 12.1 C0.6 9 2 7.6 3 7.1 C1.8 6 1.2 4.8 1.3 3.4 C1.2 1 3 0 4.8 0.1 C7 0.2 8.2 1.8 7.8 5 C7.7 6 7.4 6.6 7 7 C8.8 7.6 10 9 10 12.1Z" fill="#fff" stroke="#fff" stroke-width="1.4" opacity=".7"/><path d="M0.6 12.1 C0.6 9 2 7.6 4 6.9 L6.5 6.9 C8.6 7.6 10 9 10 12.1Z" fill="#5f6468"/><path d="M1.8 7.4 L4.6 12.1 L8 7.4 L6.4 6.8 L4.9 8.8 L3.4 6.8Z" fill="#d81e3a"/><path d="M3.5 6.9 L4.9 8.7 L6.3 6.9Z" fill="#f4f4f4"/><ellipse cx="4.3" cy="4.5" rx="2.5" ry="2.7" fill="#f2bb97"/><path d="M1.2 4 C0.8 1.2 3 0 4.8 0.1 C7.4 0.2 8.2 2.2 7.8 5 L8 7.2 L6.6 6.8 L6.4 3.2 C5 2.6 3.4 2.4 2 3.4Z" fill="#e8c01c"/></svg><div class="tx" style="left:75px;top:7.89px;font-size:9.1px;line-height:10.92px;color:#262626;">Fürst, Mathilda</div><div class="plus"></div></div>
<div class="tr" style="top:315px"><div class="tx" style="right:627.3px;text-align:right;top:7.89px;font-size:9.1px;line-height:10.92px;color:#262626;">8.</div><div class="cb"></div><svg class="pi" width="11" height="13" viewBox="0 0 11 13"><path d="M0.6 12.1 C0.6 9 2 7.6 3 7.1 C1.8 6 1.2 4.8 1.3 3.4 C1.2 1 3 0 4.8 0.1 C7 0.2 8.2 1.8 7.8 5 C7.7 6 7.4 6.6 7 7 C8.8 7.6 10 9 10 12.1Z" fill="#fff" stroke="#fff" stroke-width="1.4" opacity=".7"/><path d="M0.6 12.1 C0.6 9 2 7.6 4 6.9 L6.5 6.9 C8.6 7.6 10 9 10 12.1Z" fill="#5f6468"/><path d="M1.8 7.4 L4.6 12.1 L8 7.4 L6.4 6.8 L4.9 8.8 L3.4 6.8Z" fill="#d81e3a"/><path d="M3.5 6.9 L4.9 8.7 L6.3 6.9Z" fill="#f4f4f4"/><ellipse cx="4.3" cy="4.5" rx="2.5" ry="2.7" fill="#f2bb97"/><path d="M1.2 4 C0.8 1.2 3 0 4.8 0.1 C7.4 0.2 8.2 2.2 7.8 5 L8 7.2 L6.6 6.8 L6.4 3.2 C5 2.6 3.4 2.4 2 3.4Z" fill="#e8c01c"/></svg><div class="tx" style="left:75px;top:7.89px;font-size:9.1px;line-height:10.92px;color:#262626;">Hahn, Mika</div><div class="plus"></div></div>
<div class="tr" style="top:342px"><div class="tx" style="right:627.3px;text-align:right;top:7.89px;font-size:9.1px;line-height:10.92px;color:#262626;">9.</div><div class="cb"></div><svg class="pi" width="11" height="13" viewBox="0 0 11 13"><path d="M0.6 12.1 C0.6 9 2 7.6 3 7.1 C1.8 6 1.2 4.8 1.3 3.4 C1.2 1 3 0 4.8 0.1 C7 0.2 8.2 1.8 7.8 5 C7.7 6 7.4 6.6 7 7 C8.8 7.6 10 9 10 12.1Z" fill="#fff" stroke="#fff" stroke-width="1.4" opacity=".7"/><path d="M0.6 12.1 C0.6 9 2 7.6 4 6.9 L6.5 6.9 C8.6 7.6 10 9 10 12.1Z" fill="#5f6468"/><path d="M1.8 7.4 L4.6 12.1 L8 7.4 L6.4 6.8 L4.9 8.8 L3.4 6.8Z" fill="#d81e3a"/><path d="M3.5 6.9 L4.9 8.7 L6.3 6.9Z" fill="#f4f4f4"/><ellipse cx="4.3" cy="4.5" rx="2.5" ry="2.7" fill="#f2bb97"/><path d="M1.2 4 C0.8 1.2 3 0 4.8 0.1 C7.4 0.2 8.2 2.2 7.8 5 L8 7.2 L6.6 6.8 L6.4 3.2 C5 2.6 3.4 2.4 2 3.4Z" fill="#e8c01c"/></svg><div class="tx" style="left:75px;top:7.89px;font-size:9.1px;line-height:10.92px;color:#262626;">Kaitainen, Lotte</div><div class="plus"></div></div>
<div class="tr" style="top:369px"><div class="tx" style="right:627.3px;text-align:right;top:7.89px;font-size:9.1px;line-height:10.92px;color:#262626;">10.</div><div class="cb"></div><svg class="pi" width="11" height="13" viewBox="0 0 11 13"><path d="M0.6 12.1 C0.6 9 2 7.6 3 7.1 C1.8 6 1.2 4.8 1.3 3.4 C1.2 1 3 0 4.8 0.1 C7 0.2 8.2 1.8 7.8 5 C7.7 6 7.4 6.6 7 7 C8.8 7.6 10 9 10 12.1Z" fill="#fff" stroke="#fff" stroke-width="1.4" opacity=".7"/><path d="M0.6 12.1 C0.6 9 2 7.6 4 6.9 L6.5 6.9 C8.6 7.6 10 9 10 12.1Z" fill="#5f6468"/><path d="M1.8 7.4 L4.6 12.1 L8 7.4 L6.4 6.8 L4.9 8.8 L3.4 6.8Z" fill="#d81e3a"/><path d="M3.5 6.9 L4.9 8.7 L6.3 6.9Z" fill="#f4f4f4"/><ellipse cx="4.4" cy="4.3" rx="2.6" ry="2.8" fill="#f2bb97"/><path d="M1.4 3.6 C1 1.2 3 0.2 4.8 0.3 C7 0.3 8 1.6 7.4 4.8 L6.8 5.5 L6.6 3 C5.4 2.6 3.6 2.4 2 3.2Z" fill="#242424"/></svg><div class="tx" style="left:75px;top:7.89px;font-size:9.1px;line-height:10.92px;color:#262626;">Kasten, Maximilian</div><div class="plus"></div></div>
<div class="tr" style="top:396px"><div class="tx" style="right:627.3px;text-align:right;top:7.89px;font-size:9.1px;line-height:10.92px;color:#262626;">11.</div><div class="cb"></div><svg class="pi" width="11" height="13" viewBox="0 0 11 13"><path d="M0.6 12.1 C0.6 9 2 7.6 3 7.1 C1.8 6 1.2 4.8 1.3 3.4 C1.2 1 3 0 4.8 0.1 C7 0.2 8.2 1.8 7.8 5 C7.7 6 7.4 6.6 7 7 C8.8 7.6 10 9 10 12.1Z" fill="#fff" stroke="#fff" stroke-width="1.4" opacity=".7"/><path d="M0.6 12.1 C0.6 9 2 7.6 4 6.9 L6.5 6.9 C8.6 7.6 10 9 10 12.1Z" fill="#5f6468"/><path d="M1.8 7.4 L4.6 12.1 L8 7.4 L6.4 6.8 L4.9 8.8 L3.4 6.8Z" fill="#d81e3a"/><path d="M3.5 6.9 L4.9 8.7 L6.3 6.9Z" fill="#f4f4f4"/><ellipse cx="4.3" cy="4.5" rx="2.5" ry="2.7" fill="#f2bb97"/><path d="M1.2 4 C0.8 1.2 3 0 4.8 0.1 C7.4 0.2 8.2 2.2 7.8 5 L8 7.2 L6.6 6.8 L6.4 3.2 C5 2.6 3.4 2.4 2 3.4Z" fill="#e8c01c"/></svg><div class="tx" style="left:75px;top:7.89px;font-size:9.1px;line-height:10.92px;color:#262626;">Krüger, Annika</div><div class="plus"></div></div>
<div class="tr" style="top:423px"><div class="tx" style="right:627.3px;text-align:right;top:7.89px;font-size:9.1px;line-height:10.92px;color:#262626;">12.</div><div class="cb"></div><svg class="pi" width="11" height="13" viewBox="0 0 11 13"><path d="M0.6 12.1 C0.6 9 2 7.6 3 7.1 C1.8 6 1.2 4.8 1.3 3.4 C1.2 1 3 0 4.8 0.1 C7 0.2 8.2 1.8 7.8 5 C7.7 6 7.4 6.6 7 7 C8.8 7.6 10 9 10 12.1Z" fill="#fff" stroke="#fff" stroke-width="1.4" opacity=".7"/><path d="M0.6 12.1 C0.6 9 2 7.6 4 6.9 L6.5 6.9 C8.6 7.6 10 9 10 12.1Z" fill="#5f6468"/><path d="M1.8 7.4 L4.6 12.1 L8 7.4 L6.4 6.8 L4.9 8.8 L3.4 6.8Z" fill="#d81e3a"/><path d="M3.5 6.9 L4.9 8.7 L6.3 6.9Z" fill="#f4f4f4"/><ellipse cx="4.3" cy="4.5" rx="2.5" ry="2.7" fill="#f2bb97"/><path d="M1.2 4 C0.8 1.2 3 0 4.8 0.1 C7.4 0.2 8.2 2.2 7.8 5 L8 7.2 L6.6 6.8 L6.4 3.2 C5 2.6 3.4 2.4 2 3.4Z" fill="#e8c01c"/></svg><div class="tx" style="left:75px;top:7.89px;font-size:9.1px;line-height:10.92px;color:#262626;">Larsen, Minna</div><div class="plus"></div></div>
<div class="tr" style="top:450px"><div class="tx" style="right:627.3px;text-align:right;top:7.89px;font-size:9.1px;line-height:10.92px;color:#262626;">13.</div><div class="cb"></div><svg class="pi" width="11" height="13" viewBox="0 0 11 13"><path d="M0.6 12.1 C0.6 9 2 7.6 3 7.1 C1.8 6 1.2 4.8 1.3 3.4 C1.2 1 3 0 4.8 0.1 C7 0.2 8.2 1.8 7.8 5 C7.7 6 7.4 6.6 7 7 C8.8 7.6 10 9 10 12.1Z" fill="#fff" stroke="#fff" stroke-width="1.4" opacity=".7"/><path d="M0.6 12.1 C0.6 9 2 7.6 4 6.9 L6.5 6.9 C8.6 7.6 10 9 10 12.1Z" fill="#5f6468"/><path d="M1.8 7.4 L4.6 12.1 L8 7.4 L6.4 6.8 L4.9 8.8 L3.4 6.8Z" fill="#d81e3a"/><path d="M3.5 6.9 L4.9 8.7 L6.3 6.9Z" fill="#f4f4f4"/><ellipse cx="4.4" cy="4.3" rx="2.6" ry="2.8" fill="#f2bb97"/><path d="M1.4 3.6 C1 1.2 3 0.2 4.8 0.3 C7 0.3 8 1.6 7.4 4.8 L6.8 5.5 L6.6 3 C5.4 2.6 3.6 2.4 2 3.2Z" fill="#242424"/></svg><div class="tx" style="left:75px;top:7.89px;font-size:9.1px;line-height:10.92px;color:#262626;">Mehner, Bjarne</div><div class="plus"></div></div>
<div class="tr" style="top:477px"><div class="tx" style="right:627.3px;text-align:right;top:7.89px;font-size:9.1px;line-height:10.92px;color:#262626;">14.</div><div class="cb"></div><svg class="pi" width="11" height="13" viewBox="0 0 11 13"><path d="M0.6 12.1 C0.6 9 2 7.6 3 7.1 C1.8 6 1.2 4.8 1.3 3.4 C1.2 1 3 0 4.8 0.1 C7 0.2 8.2 1.8 7.8 5 C7.7 6 7.4 6.6 7 7 C8.8 7.6 10 9 10 12.1Z" fill="#fff" stroke="#fff" stroke-width="1.4" opacity=".7"/><path d="M0.6 12.1 C0.6 9 2 7.6 4 6.9 L6.5 6.9 C8.6 7.6 10 9 10 12.1Z" fill="#5f6468"/><path d="M1.8 7.4 L4.6 12.1 L8 7.4 L6.4 6.8 L4.9 8.8 L3.4 6.8Z" fill="#d81e3a"/><path d="M3.5 6.9 L4.9 8.7 L6.3 6.9Z" fill="#f4f4f4"/><ellipse cx="4.4" cy="4.3" rx="2.6" ry="2.8" fill="#f2bb97"/><path d="M1.4 3.6 C1 1.2 3 0.2 4.8 0.3 C7 0.3 8 1.6 7.4 4.8 L6.8 5.5 L6.6 3 C5.4 2.6 3.6 2.4 2 3.2Z" fill="#242424"/></svg><div class="tx" style="left:75px;top:7.89px;font-size:9.1px;line-height:10.92px;color:#262626;">Napolitano, Paolo</div><div class="plus"></div></div>
<div class="tr" style="top:504px"><div class="tx" style="right:627.3px;text-align:right;top:7.89px;font-size:9.1px;line-height:10.92px;color:#262626;">15.</div><div class="cb"></div><svg class="pi" width="11" height="13" viewBox="0 0 11 13"><path d="M0.6 12.1 C0.6 9 2 7.6 3 7.1 C1.8 6 1.2 4.8 1.3 3.4 C1.2 1 3 0 4.8 0.1 C7 0.2 8.2 1.8 7.8 5 C7.7 6 7.4 6.6 7 7 C8.8 7.6 10 9 10 12.1Z" fill="#fff" stroke="#fff" stroke-width="1.4" opacity=".7"/><path d="M0.6 12.1 C0.6 9 2 7.6 4 6.9 L6.5 6.9 C8.6 7.6 10 9 10 12.1Z" fill="#5f6468"/><path d="M1.8 7.4 L4.6 12.1 L8 7.4 L6.4 6.8 L4.9 8.8 L3.4 6.8Z" fill="#d81e3a"/><path d="M3.5 6.9 L4.9 8.7 L6.3 6.9Z" fill="#f4f4f4"/><ellipse cx="4.3" cy="4.5" rx="2.5" ry="2.7" fill="#f2bb97"/><path d="M1.2 4 C0.8 1.2 3 0 4.8 0.1 C7.4 0.2 8.2 2.2 7.8 5 L8 7.2 L6.6 6.8 L6.4 3.2 C5 2.6 3.4 2.4 2 3.4Z" fill="#e8c01c"/></svg><div class="tx" style="left:75px;top:7.89px;font-size:9.1px;line-height:10.92px;color:#262626;">Theissen, Anke</div><div class="plus"></div></div>
<div class="tr" style="top:531px"><div class="tx" style="right:627.3px;text-align:right;top:7.89px;font-size:9.1px;line-height:10.92px;color:#262626;">16.</div><div class="cb"></div><svg class="pi" width="11" height="13" viewBox="0 0 11 13"><path d="M0.6 12.1 C0.6 9 2 7.6 3 7.1 C1.8 6 1.2 4.8 1.3 3.4 C1.2 1 3 0 4.8 0.1 C7 0.2 8.2 1.8 7.8 5 C7.7 6 7.4 6.6 7 7 C8.8 7.6 10 9 10 12.1Z" fill="#fff" stroke="#fff" stroke-width="1.4" opacity=".7"/><path d="M0.6 12.1 C0.6 9 2 7.6 4 6.9 L6.5 6.9 C8.6 7.6 10 9 10 12.1Z" fill="#5f6468"/><path d="M1.8 7.4 L4.6 12.1 L8 7.4 L6.4 6.8 L4.9 8.8 L3.4 6.8Z" fill="#d81e3a"/><path d="M3.5 6.9 L4.9 8.7 L6.3 6.9Z" fill="#f4f4f4"/><ellipse cx="4.3" cy="4.5" rx="2.5" ry="2.7" fill="#f2bb97"/><path d="M1.2 4 C0.8 1.2 3 0 4.8 0.1 C7.4 0.2 8.2 2.2 7.8 5 L8 7.2 L6.6 6.8 L6.4 3.2 C5 2.6 3.4 2.4 2 3.4Z" fill="#e8c01c"/></svg><div class="tx" style="left:75px;top:7.89px;font-size:9.1px;line-height:10.92px;color:#262626;">Wexler, Briana</div><div class="plus"></div></div>
<div class="tr" style="top:558px"><div class="tx" style="right:627.3px;text-align:right;top:7.89px;font-size:9.1px;line-height:10.92px;color:#262626;">17.</div><div class="cb"></div><svg class="pi" width="11" height="13" viewBox="0 0 11 13"><path d="M0.6 12.1 C0.6 9 2 7.6 3 7.1 C1.8 6 1.2 4.8 1.3 3.4 C1.2 1 3 0 4.8 0.1 C7 0.2 8.2 1.8 7.8 5 C7.7 6 7.4 6.6 7 7 C8.8 7.6 10 9 10 12.1Z" fill="#fff" stroke="#fff" stroke-width="1.4" opacity=".7"/><path d="M0.6 12.1 C0.6 9 2 7.6 4 6.9 L6.5 6.9 C8.6 7.6 10 9 10 12.1Z" fill="#5f6468"/><path d="M1.8 7.4 L4.6 12.1 L8 7.4 L6.4 6.8 L4.9 8.8 L3.4 6.8Z" fill="#d81e3a"/><path d="M3.5 6.9 L4.9 8.7 L6.3 6.9Z" fill="#f4f4f4"/><ellipse cx="4.3" cy="4.5" rx="2.5" ry="2.7" fill="#f2bb97"/><path d="M1.2 4 C0.8 1.2 3 0 4.8 0.1 C7.4 0.2 8.2 2.2 7.8 5 L8 7.2 L6.6 6.8 L6.4 3.2 C5 2.6 3.4 2.4 2 3.4Z" fill="#e8c01c"/></svg><div class="tx" style="left:75px;top:7.89px;font-size:9.1px;line-height:10.92px;color:#262626;">Wirth, Anne</div><div class="plus"></div></div>
<div class="tr" style="top:585px"><div class="tx" style="right:627.3px;text-align:right;top:7.89px;font-size:9.1px;line-height:10.92px;color:#262626;">18.</div><div class="cb"></div><svg class="pi" width="11" height="13" viewBox="0 0 11 13"><path d="M0.6 12.1 C0.6 9 2 7.6 3 7.1 C1.8 6 1.2 4.8 1.3 3.4 C1.2 1 3 0 4.8 0.1 C7 0.2 8.2 1.8 7.8 5 C7.7 6 7.4 6.6 7 7 C8.8 7.6 10 9 10 12.1Z" fill="#fff" stroke="#fff" stroke-width="1.4" opacity=".7"/><path d="M0.6 12.1 C0.6 9 2 7.6 4 6.9 L6.5 6.9 C8.6 7.6 10 9 10 12.1Z" fill="#5f6468"/><path d="M1.8 7.4 L4.6 12.1 L8 7.4 L6.4 6.8 L4.9 8.8 L3.4 6.8Z" fill="#d81e3a"/><path d="M3.5 6.9 L4.9 8.7 L6.3 6.9Z" fill="#f4f4f4"/><ellipse cx="4.4" cy="4.3" rx="2.6" ry="2.8" fill="#f2bb97"/><path d="M1.4 3.6 C1 1.2 3 0.2 4.8 0.3 C7 0.3 8 1.6 7.4 4.8 L6.8 5.5 L6.6 3 C5.4 2.6 3.6 2.4 2 3.2Z" fill="#242424"/></svg><div class="tx" style="left:75px;top:7.89px;font-size:9.1px;line-height:10.92px;color:#262626;">Wolf, Klaus</div><div class="plus"></div></div>
<div class="tr" style="top:612px"><div class="tx" style="right:627.3px;text-align:right;top:7.89px;font-size:9.1px;line-height:10.92px;color:#262626;">19.</div><div class="cb"></div><svg class="pi" width="11" height="13" viewBox="0 0 11 13"><path d="M0.6 12.1 C0.6 9 2 7.6 3 7.1 C1.8 6 1.2 4.8 1.3 3.4 C1.2 1 3 0 4.8 0.1 C7 0.2 8.2 1.8 7.8 5 C7.7 6 7.4 6.6 7 7 C8.8 7.6 10 9 10 12.1Z" fill="#fff" stroke="#fff" stroke-width="1.4" opacity=".7"/><path d="M0.6 12.1 C0.6 9 2 7.6 4 6.9 L6.5 6.9 C8.6 7.6 10 9 10 12.1Z" fill="#5f6468"/><path d="M1.8 7.4 L4.6 12.1 L8 7.4 L6.4 6.8 L4.9 8.8 L3.4 6.8Z" fill="#d81e3a"/><path d="M3.5 6.9 L4.9 8.7 L6.3 6.9Z" fill="#f4f4f4"/><ellipse cx="4.4" cy="4.3" rx="2.6" ry="2.8" fill="#f2bb97"/><path d="M1.4 3.6 C1 1.2 3 0.2 4.8 0.3 C7 0.3 8 1.6 7.4 4.8 L6.8 5.5 L6.6 3 C5.4 2.6 3.6 2.4 2 3.2Z" fill="#242424"/></svg><div class="tx" style="left:75px;top:7.89px;font-size:9.1px;line-height:10.92px;color:#262626;">Zeidler, Robert</div><div class="plus"></div></div>
<div id="dlg">
<div class="ttl"></div>
<div class="tx" style="left:7px;top:7.08px;font-size:9.0px;line-height:10.8px;color:#fff;font-weight:bold;-webkit-text-stroke:0;">Drucken/Exportieren · Bericht für den Druck auswählen:</div>
<svg class="ic" style="left:369px;top:8.5px" width="8" height="8" viewBox="0 0 8 8"><path d="M1 1 L7 7 M7 1 L1 7" stroke="#fff" stroke-width="2.1"/></svg>
<div class="body">
<svg class="ic" style="left:20px;top:21.700000000000003px" width="25" height="32" viewBox="0 0 25 32"><path d="M0.5 0.5 H16.3 L24.5 8.7 V31.5 H0.5Z" fill="#fff" stroke="#d6595a" stroke-width="1.1"/><path d="M16.3 0.5 V8.7 H24.5" fill="#f7dcdc" stroke="#d6595a" stroke-width="1.1" stroke-linejoin="round"/><g stroke="#d6595a" stroke-width="1" fill="none" stroke-linejoin="round"><path d="M11.6 11.2 C12.7 11.4 12.6 14.2 11.6 16.3 C10.6 14.2 10.5 11.4 11.6 11.2Z"/><path d="M11.6 16.3 L9.3 20.6 L14.4 20.1Z"/><path d="M9.3 20.6 C8.2 22 7.4 23 6.3 23.8 C5.6 24.3 5 23.6 5.6 23 C6.6 22 8 21 9.3 20.6Z"/><path d="M14.4 20.1 C15.8 19.8 17.4 20 18.4 20.8 C18.9 21.3 18.3 21.8 17.6 21.6 C16.6 21.3 15.4 20.8 14.4 20.1Z"/></g></svg>
<div class="tx" style="left:57.299999999999955px;top:24.28px;font-size:8.9px;line-height:10.68px;color:#222;font-weight:bold;-webkit-text-stroke:0;">Noten des Schülers - Miniversion</div>
<div class="tx" style="left:57.299999999999955px;top:34.94px;font-size:8.2px;line-height:9.84px;color:#7b7b7b;">PDF · Notenliste aller Fächer eines Schülers.</div>
<div class="tx" style="left:57.299999999999955px;top:43.94px;font-size:8.2px;line-height:9.84px;color:#7b7b7b;">Mini-Version, mehrere Schüler pro Seite</div>
<svg class="ic" style="left:20px;top:79.69999999999999px" width="25" height="32" viewBox="0 0 25 32"><path d="M0.5 0.5 H16.3 L24.5 8.7 V31.5 H0.5Z" fill="#fff" stroke="#d6595a" stroke-width="1.1"/><path d="M16.3 0.5 V8.7 H24.5" fill="#f7dcdc" stroke="#d6595a" stroke-width="1.1" stroke-linejoin="round"/><g stroke="#d6595a" stroke-width="1" fill="none" stroke-linejoin="round"><path d="M11.6 11.2 C12.7 11.4 12.6 14.2 11.6 16.3 C10.6 14.2 10.5 11.4 11.6 11.2Z"/><path d="M11.6 16.3 L9.3 20.6 L14.4 20.1Z"/><path d="M9.3 20.6 C8.2 22 7.4 23 6.3 23.8 C5.6 24.3 5 23.6 5.6 23 C6.6 22 8 21 9.3 20.6Z"/><path d="M14.4 20.1 C15.8 19.8 17.4 20 18.4 20.8 C18.9 21.3 18.3 21.8 17.6 21.6 C16.6 21.3 15.4 20.8 14.4 20.1Z"/></g></svg>
<div class="tx" style="left:57.299999999999955px;top:69.38px;font-size:8.9px;line-height:10.68px;color:#222;font-weight:bold;-webkit-text-stroke:0;">Noten des Schülers - Kurzversion</div>
<div class="tx" style="left:57.299999999999955px;top:80.04px;font-size:8.2px;line-height:9.84px;color:#7b7b7b;">PDF · Vollständiger Bericht über alle Noten und</div>
<div class="tx" style="left:57.299999999999955px;top:89.04px;font-size:8.2px;line-height:9.84px;color:#7b7b7b;">Anmerkungen zu allen Fächern jedes einzelnen</div>
<div class="tx" style="left:57.299999999999955px;top:98.04px;font-size:8.2px;line-height:9.84px;color:#7b7b7b;">Schülers. Kompaktere Druckversion - alle</div>
<div class="tx" style="left:57.299999999999955px;top:107.04px;font-size:8.2px;line-height:9.84px;color:#7b7b7b;">Noten eines Faches in einer Zeile</div>
<div class="tx" style="left:57.299999999999955px;top:116.04px;font-size:8.2px;line-height:9.84px;color:#7b7b7b;">zusammengefasst. Etwa 1 Seite pro Schüler.</div>
<svg class="ic" style="left:20px;top:147.2px" width="25" height="32" viewBox="0 0 25 32"><path d="M0.5 0.5 H16.3 L24.5 8.7 V31.5 H0.5Z" fill="#fff" stroke="#d6595a" stroke-width="1.1"/><path d="M16.3 0.5 V8.7 H24.5" fill="#f7dcdc" stroke="#d6595a" stroke-width="1.1" stroke-linejoin="round"/><g stroke="#d6595a" stroke-width="1" fill="none" stroke-linejoin="round"><path d="M11.6 11.2 C12.7 11.4 12.6 14.2 11.6 16.3 C10.6 14.2 10.5 11.4 11.6 11.2Z"/><path d="M11.6 16.3 L9.3 20.6 L14.4 20.1Z"/><path d="M9.3 20.6 C8.2 22 7.4 23 6.3 23.8 C5.6 24.3 5 23.6 5.6 23 C6.6 22 8 21 9.3 20.6Z"/><path d="M14.4 20.1 C15.8 19.8 17.4 20 18.4 20.8 C18.9 21.3 18.3 21.8 17.6 21.6 C16.6 21.3 15.4 20.8 14.4 20.1Z"/></g></svg>
<div class="tx" style="left:57.299999999999955px;top:136.38px;font-size:8.9px;line-height:10.68px;color:#222;font-weight:bold;-webkit-text-stroke:0;">Noten des Schülers - Vollversion</div>
<div class="tx" style="left:57.299999999999955px;top:147.04px;font-size:8.2px;line-height:9.84px;color:#7b7b7b;">PDF · Vollständiger Bericht über alle Noten und</div>
<div class="tx" style="left:57.299999999999955px;top:156.04px;font-size:8.2px;line-height:9.84px;color:#7b7b7b;">Anmerkungen zu allen Fächern jedes einzelnen</div>
<div class="tx" style="left:57.299999999999955px;top:165.04px;font-size:8.2px;line-height:9.84px;color:#7b7b7b;">Schülers. Ausführliche Druckversion - jedes</div>
<div class="tx" style="left:57.299999999999955px;top:174.04px;font-size:8.2px;line-height:9.84px;color:#7b7b7b;">Ereignis hat eine eigene Zeile. Mehrere Seiten</div>
<div class="tx" style="left:57.299999999999955px;top:183.04px;font-size:8.2px;line-height:9.84px;color:#7b7b7b;">pro Schüler!</div>
<svg class="ic" style="left:20px;top:215.10000000000002px" width="25" height="32" viewBox="0 0 25 32"><path d="M0.5 0.5 H16.3 L24.5 8.7 V31.5 H0.5Z" fill="#fff" stroke="#5d8ecb" stroke-width="1.1"/><path d="M16.3 0.5 V8.7 H24.5" fill="#cfe0f4" stroke="#5d8ecb" stroke-width="1.1" stroke-linejoin="round"/><path d="M5.2 19.8 C6 18 7.2 17.8 7.8 19.6 C8.4 21.6 9 25.8 10.2 26.1 C11.4 26.3 12.4 21.2 13 19.2 C13.4 21.6 14 25.2 15.2 25.2 C16.6 25.2 17.2 19.2 18 16.6 C18.6 14.8 19.4 13.8 20.4 13.2" stroke="#5d8ecb" stroke-width="1.15" fill="none" stroke-linecap="round"/></svg>
<div class="tx" style="left:57.299999999999955px;top:203.38px;font-size:8.9px;line-height:10.68px;color:#222;font-weight:bold;-webkit-text-stroke:0;">Noten des Schülers - RTF</div>
<div class="tx" style="left:57.299999999999955px;top:214.04px;font-size:8.2px;line-height:9.84px;color:#7b7b7b;">RTF · Vollständiger Bericht über alle Noten und</div>
<div class="tx" style="left:57.299999999999955px;top:223.04px;font-size:8.2px;line-height:9.84px;color:#7b7b7b;">Anmerkungen zu allen Fächern jedes einzelnen</div>
<div class="tx" style="left:57.299999999999955px;top:232.04px;font-size:8.2px;line-height:9.84px;color:#7b7b7b;">Schülers. Kompaktere Druckversion - alle</div>
<div class="tx" style="left:57.299999999999955px;top:241.04px;font-size:8.2px;line-height:9.84px;color:#7b7b7b;">Noten eines Faches in einer Zeile</div>
<div class="tx" style="left:57.299999999999955px;top:250.04px;font-size:8.2px;line-height:9.84px;color:#7b7b7b;">zusammengefasst. Etwa 1 Seite pro Schüler.</div>
<div class="tx" style="left:9.5px;top:280.16px;font-size:10.4px;line-height:12.48px;color:#3a4450;font-weight:bold;-webkit-text-stroke:0;">Schüler und Schülerinnen in Lerngruppe</div>
<div class="hl" style="top:294px"></div>
<svg class="ic" style="left:20px;top:313px" width="25" height="32" viewBox="0 0 25 32"><path d="M0.5 0.5 H16.3 L24.5 8.7 V31.5 H0.5Z" fill="#fff" stroke="#7e8ea0" stroke-width="1.1"/><path d="M16.3 0.5 V8.7 H24.5" fill="#fff" stroke="#7e8ea0" stroke-width="1.1" stroke-linejoin="round"/><path d="M5.1 13.1 H19.8 M5.1 15.7 H15.9 M5.1 18.4 H19.8 M5.1 21.1 H15.9 M5.1 23.9 H19.8" stroke="#8e9cab" stroke-width="0.95"/></svg>
<div class="tx" style="left:58px;top:310.58px;font-size:8.9px;line-height:10.68px;color:#222;font-weight:bold;-webkit-text-stroke:0;">Schüler und Schülerinnen in Lerngruppe</div>
<div class="tx" style="left:58px;top:320.58px;font-size:8.9px;line-height:10.68px;color:#222;font-weight:bold;-webkit-text-stroke:0;">1</div>
<div class="tx" style="left:57.299999999999955px;top:331.44px;font-size:8.2px;line-height:9.84px;color:#7b7b7b;">PDF / HTML · Tabelle: Vorname +</div>
<div class="tx" style="left:57.299999999999955px;top:340.24px;font-size:8.2px;line-height:9.84px;color:#7b7b7b;">Familienname</div>
<svg class="ic" style="left:20px;top:364px" width="25" height="32" viewBox="0 0 25 32"><path d="M0.5 0.5 H16.3 L24.5 8.7 V31.5 H0.5Z" fill="#fff" stroke="#7e8ea0" stroke-width="1.1"/><path d="M16.3 0.5 V8.7 H24.5" fill="#fff" stroke="#7e8ea0" stroke-width="1.1" stroke-linejoin="round"/><path d="M5.1 13.1 H19.8 M5.1 15.7 H15.9 M5.1 18.4 H19.8 M5.1 21.1 H15.9 M5.1 23.9 H19.8" stroke="#8e9cab" stroke-width="0.95"/></svg>
<div class="tx" style="left:58px;top:361.58px;font-size:8.9px;line-height:10.68px;color:#222;font-weight:bold;-webkit-text-stroke:0;">Schüler und Schülerinnen in Lerngruppe</div>
<div class="tx" style="left:58px;top:371.58px;font-size:8.9px;line-height:10.68px;color:#222;font-weight:bold;-webkit-text-stroke:0;">2</div>
<div class="tx" style="left:57.299999999999955px;top:382.24px;font-size:8.2px;line-height:9.84px;color:#7b7b7b;">PDF / HTML · Tabelle: Vorname +</div>
<div class="tx" style="left:57.299999999999955px;top:391.24px;font-size:8.2px;line-height:9.84px;color:#7b7b7b;">Familienname + Klasse</div>
<div class="redbox" style="left:10px;top:304px;width:274px;height:110px;border-radius:6px"></div>
<div class="tx" style="left:9px;top:420.76px;font-size:10.4px;line-height:12.48px;color:#3a4450;font-weight:bold;-webkit-text-stroke:0;">Anmerkungen/Entscheidungen</div>
<div class="hl" style="top:436px"></div>
<svg class="ic" style="left:20px;top:452.5px" width="25" height="32" viewBox="0 0 25 32"><path d="M0.5 0.5 H16.3 L24.5 8.7 V31.5 H0.5Z" fill="#fff" stroke="#7e8ea0" stroke-width="1.1"/><path d="M16.3 0.5 V8.7 H24.5" fill="#fff" stroke="#7e8ea0" stroke-width="1.1" stroke-linejoin="round"/><path d="M5.1 13.1 H19.8 M5.1 15.7 H15.9 M5.1 18.4 H19.8 M5.1 21.1 H15.9 M5.1 23.9 H19.8" stroke="#8e9cab" stroke-width="0.95"/></svg>
<div class="tx" style="left:57.299999999999955px;top:459.08px;font-size:8.9px;line-height:10.68px;color:#222;font-weight:bold;-webkit-text-stroke:0;">Liste der Anmerkungen</div>
<div class="tx" style="left:57.299999999999955px;top:469.74px;font-size:8.2px;line-height:9.84px;color:#7b7b7b;">PDF / HTML</div>
<div class="tx" style="left:9px;top:507.96px;font-size:10.4px;line-height:12.48px;color:#3a4450;font-weight:bold;-webkit-text-stroke:0;">Eigene Vorlagen</div>
<div class="hl" style="top:522.5px"></div>
</div>
<div class="a" style="left:357px;top:24px;width:12px;height:505px;background:#f1f1f1"></div>
<div class="a" style="left:358px;top:241.5px;width:10px;height:196.5px;background:#c1c1c1"></div>
<svg class="ic" style="left:359.5px;top:28.599999999999994px" width="7" height="4" viewBox="0 0 7 4"><path d="M0 4 L3.5 0 L7 4Z" fill="#333"/></svg>
<svg class="ic" style="left:360px;top:519.5px" width="6" height="3.5" viewBox="0 0 6 3.5"><path d="M0 0 H6 L3 3.5Z" fill="#333"/></svg>
</div>
</body></html>
